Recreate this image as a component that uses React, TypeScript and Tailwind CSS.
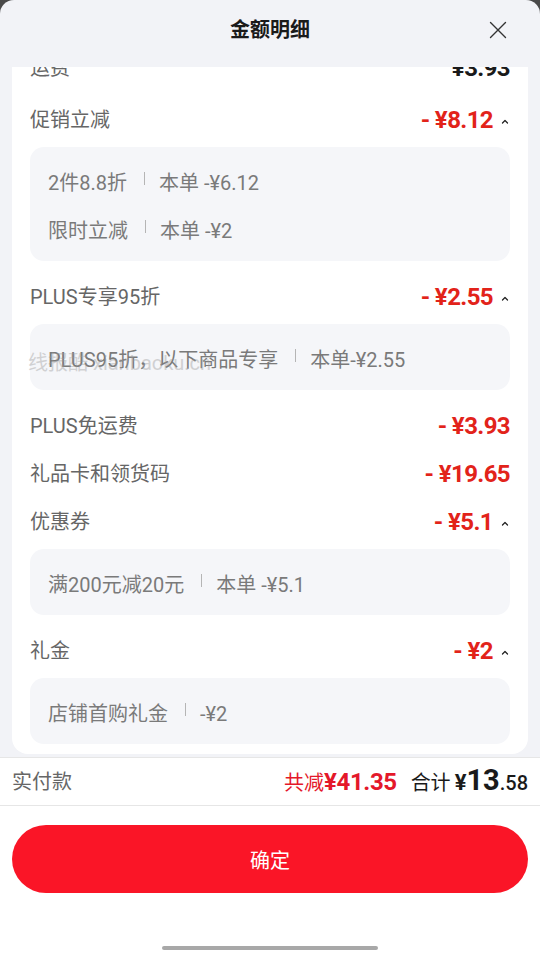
import React from "react";

type Row = {
  label: string;
  value: string;
  open?: boolean;
  details?: { name: string; amount: string }[];
  mark?: boolean;
};

const rows: Row[] = [
  {
    label: "促销立减",
    value: "- ¥8.12",
    open: true,
    details: [
      { name: "2件8.8折", amount: "本单 -¥6.12" },
      { name: "限时立减", amount: "本单 -¥2" },
    ],
  },
  {
    label: "PLUS专享95折",
    value: "- ¥2.55",
    open: true,
    mark: true,
    details: [{ name: "PLUS95折，以下商品专享", amount: "本单-¥2.55" }],
  },
  { label: "PLUS免运费", value: "- ¥3.93" },
  { label: "礼品卡和领货码", value: "- ¥19.65" },
  {
    label: "优惠券",
    value: "- ¥5.1",
    open: true,
    details: [{ name: "满200元减20元", amount: "本单 -¥5.1" }],
  },
  {
    label: "礼金",
    value: "- ¥2",
    open: true,
    details: [{ name: "店铺首购礼金", amount: "-¥2" }],
  },
];

const font = { fontFamily: 'Roboto, "Noto Sans CJK SC", sans-serif' };

function ChevronUp() {
  return (
    <svg width="12" height="12" viewBox="0 0 12 12" className="ml-[6px] -mr-[1px] mt-[4px]">
      <path d="M3.5 7 L6 4.5 L8.5 7" fill="none" stroke="#222" strokeWidth="1.3" strokeLinecap="round" strokeLinejoin="round" />
    </svg>
  );
}

export default function App() {
  return (
    <div className="w-[540px] h-[954px] bg-[#4a4a4a] overflow-hidden" style={font}>
      <div className="h-full flex flex-col rounded-t-[14px] overflow-hidden bg-[#f2f3f7]">
        {/* header */}
        <div className="h-[67px] shrink-0 relative flex items-center justify-center pb-[7px]">
          <h1 className="text-[20px] font-bold text-[#1a1a1a]">金额明细</h1>
          <button className="absolute right-[33px] top-[21px]">
            <svg width="18" height="18" viewBox="0 0 18 18">
              <path d="M1.5 1.5 L16.5 16.5 M16.5 1.5 L1.5 16.5" stroke="#333" strokeWidth="1.4" strokeLinecap="round" />
            </svg>
          </button>
        </div>

        {/* scroll area */}
        <div className="flex-1 px-3 pb-[3px] overflow-hidden">
          <div className="h-full bg-white rounded-b-[16px] overflow-hidden">
            <div className="-mt-[23px] px-[18px] pb-[10px]">
              <div className="h-12 mb-1 flex items-center justify-between">
                <span className="text-[20px] text-[#666]">运费</span>
                <span className="text-[24px] font-bold text-[#1a1a1a] tracking-[-0.6px]">¥3.93</span>
              </div>

              {rows.map((row) => (
                <div key={row.label}>
                  <div className="h-12 flex items-center justify-between">
                    <span className="text-[20px] text-[#666]">{row.label}</span>
                    <span className="flex items-center">
                      <span className="text-[24px] font-bold text-[#e2231a] tracking-[-0.6px]">{row.value}</span>
                      {row.open && <ChevronUp />}
                    </span>
                  </div>
                  {row.details && (
                    <div className="relative mt-[3px] mb-3 bg-[#f5f6f9] rounded-[14px] pl-[18px] pt-3 pb-[6px]">
                      {row.details.map((d) => (
                        <div key={d.name} className="h-12 flex items-center text-[20px] text-[#7a7a7a]">
                          <span>{d.name}</span>
                          <span className="ml-[17px] mr-[14px] -mt-[10px] w-px h-[13px] bg-[#b5b5b5]" />
                          <span>{d.amount}</span>
                        </div>
                      ))}
                      {row.mark && (
                        <span className="absolute left-[-2px] top-[24px] text-[20px] text-[#9a9a9a] opacity-40 pointer-events-none">
                          线报酷 xianbaoku.cn
                        </span>
                      )}
                    </div>
                  )}
                </div>
              ))}
            </div>
          </div>
        </div>

        {/* footer */}
        <div className="shrink-0 bg-white">
          <div className="h-[49px] border-y border-[#e6e6e6] px-3 flex items-center justify-between">
            <span className="text-[20px] text-[#666]">实付款</span>
            <div className="flex items-baseline">
              <span className="text-[20px] text-[#e4182a]">共减</span>
              <span className="text-[24px] font-bold text-[#e4182a] tracking-[-0.4px]">¥41.35</span>
              <span className="ml-[14px] text-[20px] text-[#1a1a1a]">合计</span>
              <span className="ml-[4px] text-[22px] font-bold text-[#1a1a1a]">¥</span>
              <span className="text-[29px] font-bold text-[#1a1a1a] leading-none">13</span>
              <span className="text-[20px] font-medium text-[#1a1a1a]">.58</span>
            </div>
          </div>
          <div className="px-3 pt-[19px] pb-[53px]">
            <button className="w-full h-[68px] rounded-full bg-[#fa1527] text-white text-[20px] pt-[3px]">确定</button>
          </div>
          <div className="flex justify-center pb-[4px]">
            <div className="w-[216px] h-[4px] rounded-full bg-[#a8a8a8]" />
          </div>
        </div>
      </div>
    </div>
  );
}
